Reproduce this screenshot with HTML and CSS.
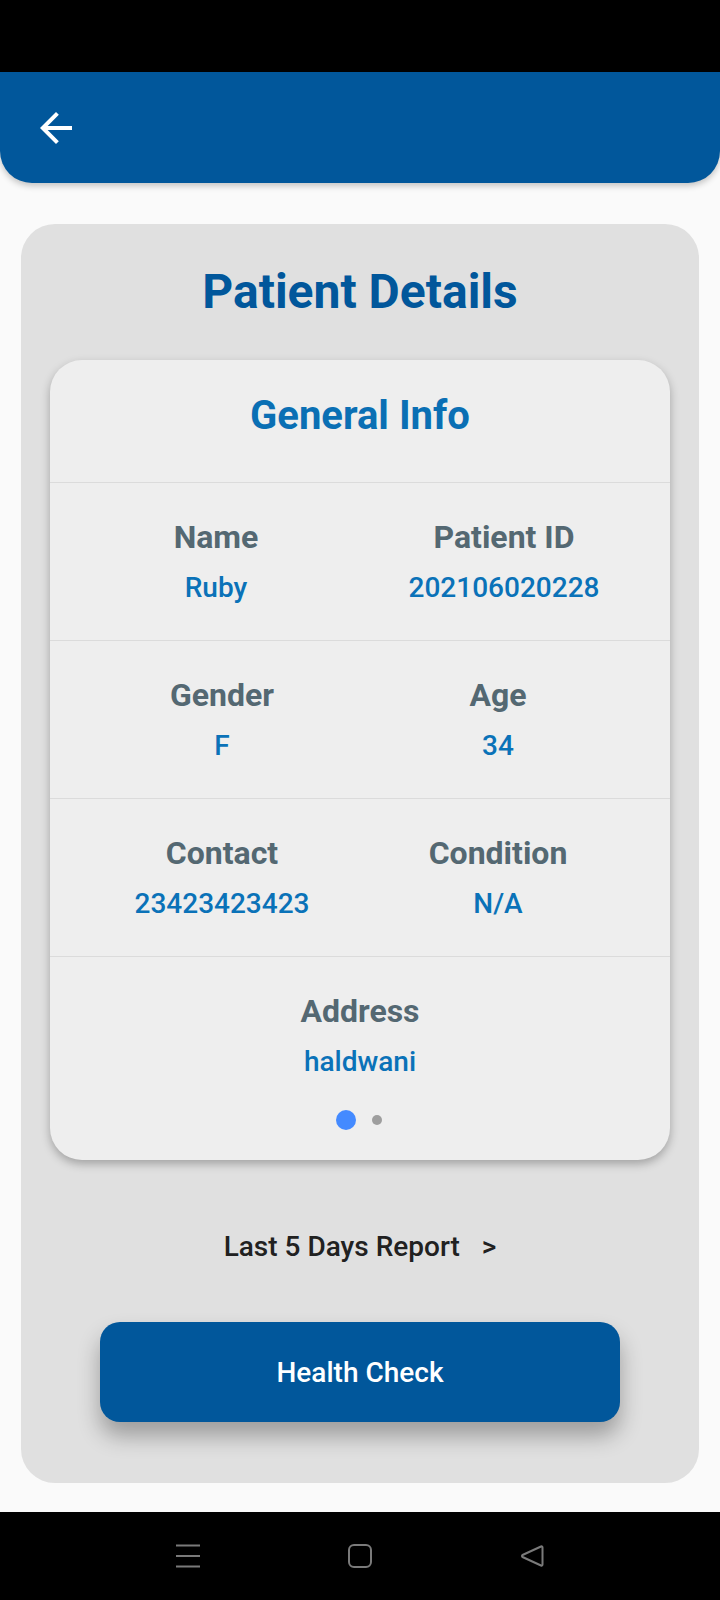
FILE: index.html
```html
<!DOCTYPE html>
<html lang="en">
<head>
<meta charset="utf-8">
<title>Patient Details</title>
<link rel="stylesheet" href="styles.css">
</head>
<body>
<div class="screen">
  <div class="status-bar"></div>
  <header class="app-bar">
    <button class="back-btn" aria-label="Back">
      <svg viewBox="0 0 24 24" width="48" height="48"><path fill="#ffffff" d="M20 11H7.83l5.59-5.59L12 4l-8 8 8 8 1.41-1.41L7.83 13H20v-2z"/></svg>
    </button>
  </header>

  <main class="content">
    <section class="outer-card">
      <h1 class="page-title">Patient Details</h1>

      <div class="info-card">
        <h2 class="info-title">General Info</h2>

        <div class="info-row info-row--wide">
          <div class="field"><div class="label">Name</div><div class="value">Ruby</div></div>
          <div class="field"><div class="label">Patient ID</div><div class="value">202106020228</div></div>
        </div>
        <div class="info-row info-row--narrow">
          <div class="field"><div class="label">Gender</div><div class="value">F</div></div>
          <div class="field"><div class="label">Age</div><div class="value">34</div></div>
        </div>
        <div class="info-row info-row--narrow">
          <div class="field"><div class="label">Contact</div><div class="value">23423423423</div></div>
          <div class="field"><div class="label">Condition</div><div class="value">N/A</div></div>
        </div>
        <div class="info-row info-row--single">
          <div class="field"><div class="label">Address</div><div class="value">haldwani</div></div>
        </div>
        <div class="dots">
          <span class="dot dot--active"></span>
          <span class="dot"></span>
        </div>
      </div>

      <div class="report-link">Last 5 Days Report<span class="chev">&gt;</span></div>

      <button class="primary-btn">Health Check</button>
    </section>
  </main>

  <nav class="nav-bar">
    <svg class="nav-icon" viewBox="0 0 24 24" width="24" height="24"><path d="M0 1.5H24M0 12H24M0 22.5H24" stroke="#7a7a7a" stroke-width="2" fill="none"/></svg>
    <svg class="nav-icon" viewBox="0 0 24 24" width="24" height="24"><rect x="1" y="1" width="22" height="22" rx="5" stroke="#7a7a7a" stroke-width="2" fill="none"/></svg>
    <svg class="nav-icon" viewBox="0 0 24 24" width="24" height="24"><path d="M21 2.5 L2.5 11 Q1.5 12 2.5 13 L21 21.5 Q22.5 22 22.5 20.5 V3.5 Q22.5 2 21 2.5 Z" stroke="#7a7a7a" stroke-width="2" fill="none" stroke-linejoin="round"/></svg>
  </nav>
</div>
</body>
</html>
```

FILE: styles.css
```css
* { box-sizing: border-box; }

html, body {
  margin: 0;
  padding: 0;
  background: #fafafa;
}

body {
  font-family: Roboto, "Noto Sans", "Liberation Sans", sans-serif;
}

.screen {
  width: 720px;
  height: 1600px;
  display: flex;
  flex-direction: column;
  overflow: hidden;
}

.status-bar {
  height: 72px;
  background: #000;
  flex: none;
}

.app-bar {
  flex: none;
  height: 111px;
  background: #01579b;
  border-radius: 0 0 32px 32px;
  box-shadow: 0 3px 6px rgba(0, 0, 0, 0.22);
  display: flex;
  align-items: center;
  padding-left: 32px;
  position: relative;
  z-index: 1;
}

.back-btn {
  width: 48px;
  height: 48px;
  padding: 0;
  border: 0;
  background: transparent;
  display: flex;
  align-items: center;
  justify-content: center;
}

.back-btn svg { display: block; }

.content {
  flex: none;
  padding: 41px 21px 0;
}

.outer-card {
  background: #e0e0e0;
  border-radius: 34px;
  padding: 40px 29px 61px;
  display: flex;
  flex-direction: column;
  align-items: stretch;
}

.page-title {
  margin: 0;
  text-align: center;
  font-size: 48px;
  line-height: 56px;
  font-weight: 700;
  color: #01579b;
}

.info-card {
  margin-top: 40px;
  background: #eeeeee;
  border-radius: 32px;
  box-shadow: 0 4px 10px rgba(0, 0, 0, 0.28);
  padding-bottom: 30px;
}

.info-title {
  margin: 0;
  padding: 33px 0 43px;
  text-align: center;
  font-size: 40px;
  line-height: 46px;
  font-weight: 700;
  color: #0a6fb4;
}

.info-row {
  border-top: 1px solid #dbdbdb;
  padding-top: 36px;
  padding-bottom: 35px;
  display: grid;
  grid-template-columns: 1fr 1fr;
}

.info-row--wide { padding-left: 22px; padding-right: 22px; }
.info-row--narrow { padding-left: 34px; padding-right: 34px; }
.info-row--single {
  grid-template-columns: 1fr;
  padding-bottom: 0;
}

.field {
  display: flex;
  flex-direction: column;
  align-items: center;
  gap: 16px;
}

.label {
  font-size: 32px;
  line-height: 36px;
  font-weight: 700;
  color: #546872;
}

.value {
  font-size: 28px;
  line-height: 34px;
  font-weight: 500;
  color: #0a72b8;
}

.dots {
  margin-top: 31px;
  height: 20px;
  display: flex;
  justify-content: center;
  align-items: center;
  gap: 16px;
  padding-right: 2px;
}

.dot {
  width: 10px;
  height: 10px;
  border-radius: 50%;
  background: #9e9e9e;
}

.dot--active {
  width: 20px;
  height: 20px;
  background: #448aff;
}

.report-link {
  margin-top: 70px;
  text-align: center;
  font-size: 28px;
  line-height: 34px;
  font-weight: 500;
  color: #212121;
}

.chev {
  margin-left: 22px;
}

.primary-btn {
  margin: 58px auto 0;
  width: 520px;
  height: 100px;
  border: 0;
  border-radius: 20px;
  background: #01579b;
  color: #ffffff;
  font-family: Roboto, "Noto Sans", "Liberation Sans", sans-serif;
  font-size: 28px;
  font-weight: 500;
  box-shadow: 0 14px 22px rgba(0, 0, 0, 0.3);
}

.nav-bar {
  margin-top: auto;
  height: 88px;
  background: #000;
  display: flex;
  justify-content: center;
  align-items: center;
  gap: 148px;
  flex: none;
}

.nav-icon { display: block; }
```
